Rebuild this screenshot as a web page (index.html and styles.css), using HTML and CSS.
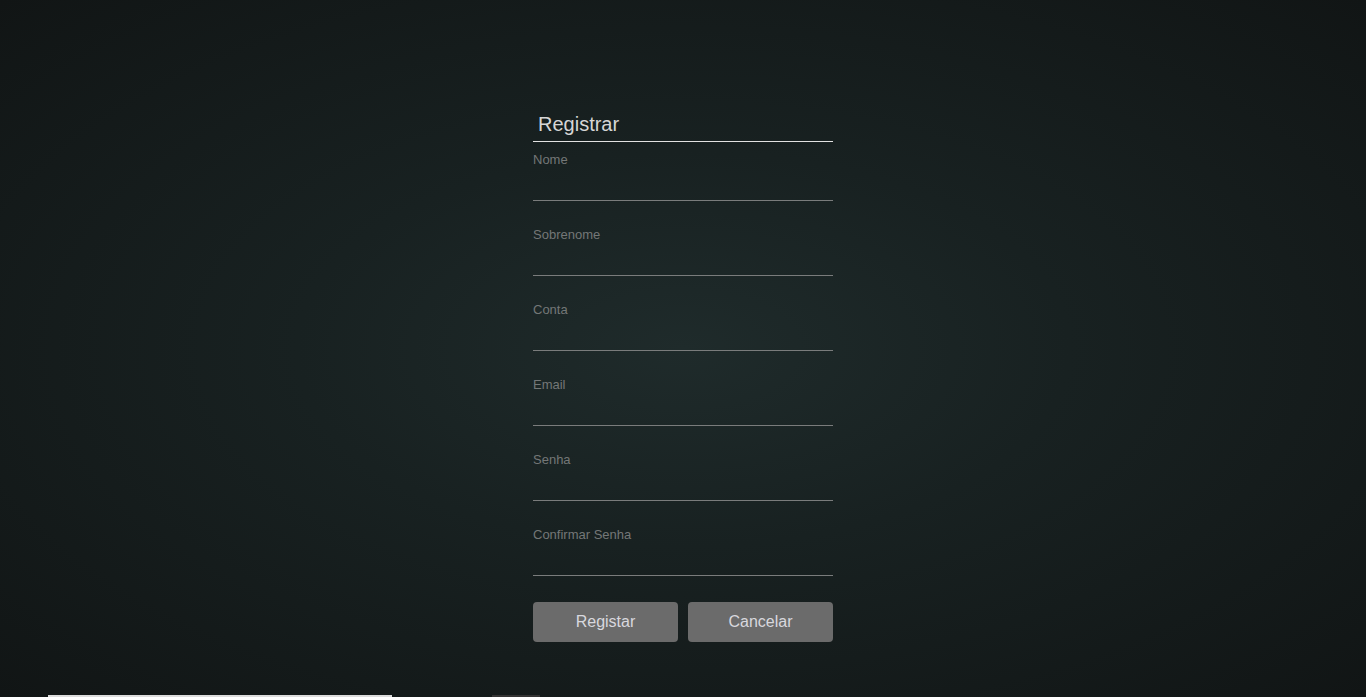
FILE: index.html
```html
<!DOCTYPE html>
<html lang="pt">
<head>
<meta charset="utf-8">
<title>Registrar</title>
<link rel="stylesheet" href="styles.css">
</head>
<body>
<main class="page">
  <form class="register">
    <h1 class="title">Registrar</h1>
    <div class="field"><label>Nome</label><input type="text"></div>
    <div class="field"><label>Sobrenome</label><input type="text"></div>
    <div class="field"><label>Conta</label><input type="text"></div>
    <div class="field"><label>Email</label><input type="email"></div>
    <div class="field"><label>Senha</label><input type="password"></div>
    <div class="field"><label>Confirmar Senha</label><input type="password"></div>
    <div class="actions">
      <button type="button" class="btn">Registar</button>
      <button type="button" class="btn">Cancelar</button>
    </div>
  </form>
</main>
<footer class="bottom">
  <span class="bar-light"></span>
  <span class="bar-dark"></span>
</footer>
</body>
</html>
```
FILE: styles.css
```css
html, body {
  margin: 0;
  padding: 0;
}
body {
  min-height: 100vh;
  font-family: "Liberation Sans", Arial, sans-serif;
  background: radial-gradient(ellipse farthest-corner at 50% 50%, #1f2b2b 0%, #182121 40%, #111515 100%);
  overflow: hidden;
}
.page {
  display: flex;
  justify-content: center;
  padding-top: 112px;
}
.register {
  width: 300px;
  display: flex;
  flex-direction: column;
}
.title {
  margin: 0;
  font-weight: normal;
  font-size: 20px;
  line-height: 24px;
  color: #d6d6d6;
  padding: 0 0 5px 5px;
  border-bottom: 1px solid #e2e2e2;
  margin-bottom: 10px;
}
.field {
  display: flex;
  flex-direction: column;
  margin-bottom: 26px;
}
.field label {
  font-size: 13px;
  line-height: 15px;
  color: #747777;
}
.field input {
  box-sizing: border-box;
  height: 34px;
  background: transparent;
  border: none;
  border-bottom: 1px solid #7a7c7c;
  color: #ddd;
  font-family: inherit;
  font-size: 14px;
  padding: 0;
  outline: none;
}
.actions {
  display: flex;
  gap: 10px;
}
.btn {
  flex: 1;
  height: 40px;
  border: none;
  border-radius: 4px;
  background: #6b6b6b;
  color: #d8d8de;
  font-family: inherit;
  font-size: 16px;
  cursor: pointer;
}
.bottom {
  display: flex;
  align-items: flex-start;
  gap: 100px;
  padding-left: 48px;
  margin-top: 53px;
  height: 3px;
}
.bar-light {
  width: 344px;
  height: 3px;
  background: #dcdcdc;
}
.bar-dark {
  width: 48px;
  height: 3px;
  background: #333;
}
```
